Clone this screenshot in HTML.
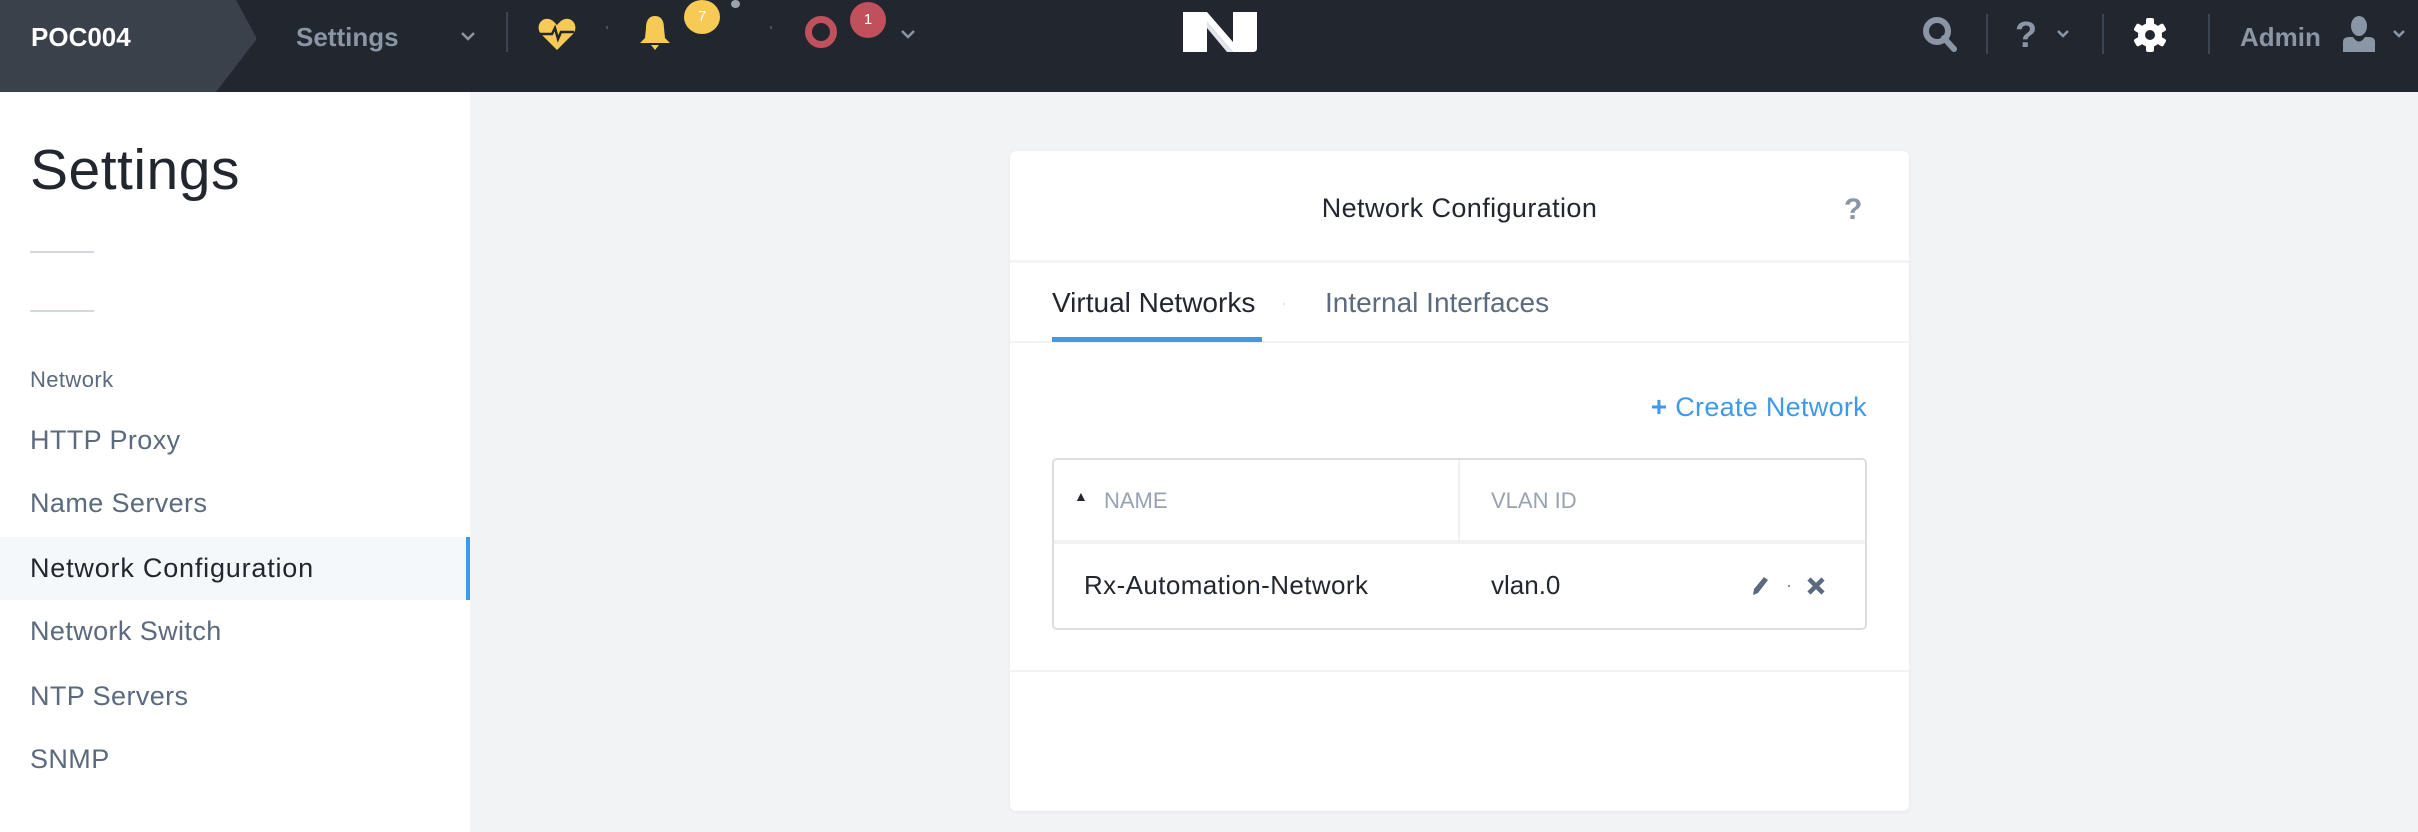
<!DOCTYPE html>
<html><head><meta charset="utf-8"><style>
*{margin:0;padding:0;box-sizing:border-box}
body{width:2418px;height:832px;overflow:hidden;background:#f2f3f5;font-family:"Liberation Sans",sans-serif;position:relative}
.top{position:absolute;left:0;top:0;width:2418px;height:92px;background:#22272f}
.abs{position:absolute}
.side{position:absolute;left:0;top:92px;width:470px;height:740px;background:#fff}
.nav{position:absolute;left:30px;font-size:27px;color:#5b6a7e;letter-spacing:0.4px}
.card{position:absolute;left:1010px;top:151px;width:899px;height:660px;background:#fff;border-radius:6px;box-shadow:0 1px 3px rgba(0,0,0,.06)}
</style></head><body>
<div class="top">
<svg class="abs" style="left:0;top:0" width="260" height="92"><polygon points="0,0 236,0 256,37 256,40 216,92 0,92" fill="#3a414b"/></svg>
<div class="abs" style="left:31px;top:22px;font-size:26px;font-weight:bold;color:#fff">POC004</div>
<div class="abs" style="left:296px;top:22px;font-size:26px;font-weight:bold;color:#8a95a5">Settings</div>
<svg class="abs" style="left:460px;top:30px" width="16" height="12"><path d="M2 3 L8 9 L14 3" stroke="#8a95a5" stroke-width="2.5" fill="none"/></svg>
<div class="abs" style="left:506px;top:12px;width:2px;height:40px;background:#3d4550"></div>
<svg class="abs" style="left:538px;top:17px" width="38" height="34" viewBox="0 0 38 34"><path d="M19 33 L3 17 C-3 10 3 0 11 2 C15 3 17 6 19 8 C21 6 23 3 27 2 C35 0 41 10 35 17 Z" fill="#f7c955"/><path d="M2 17 H14 L17 11 L20 22 L23 15 L36 15" stroke="#22272f" stroke-width="2.5" fill="none"/></svg>
<div class="abs" style="left:606px;top:26px;width:2px;height:3px;background:#4a525d"></div>
<svg class="abs" style="left:638px;top:14px" width="34" height="36" viewBox="0 0 34 36"><path d="M17 2 C24 2 26 8 26 14 L27 24 L32 29 L2 29 L7 24 L8 14 C8 8 10 2 17 2Z" fill="#f7c955"/><path d="M13 31 H21 L17 36Z" fill="#f7c955"/></svg>
<div class="abs" style="left:684px;top:0;width:36px;height:34px;border-radius:50%;background:#f7c955;color:#fff;font-size:15px;text-align:center;line-height:34px">7</div>
<div class="abs" style="left:731px;top:0;width:9px;height:8px;border-radius:50%;background:#9aa3ae"></div>
<div class="abs" style="left:770px;top:26px;width:2px;height:3px;background:#4a525d"></div>
<div class="abs" style="left:805px;top:16px;width:32px;height:32px;border-radius:50%;border:7px solid #c0505b"></div>
<div class="abs" style="left:850px;top:2px;width:36px;height:36px;border-radius:50%;background:#c0505b;color:#fff;font-size:15px;text-align:center;line-height:36px">1</div>
<svg class="abs" style="left:900px;top:28px" width="16" height="12"><path d="M2 3 L8 9 L14 3" stroke="#8a95a5" stroke-width="2.5" fill="none"/></svg>
<svg class="abs" style="left:1183px;top:12px" width="74" height="40" viewBox="0 0 74 40"><path d="M0 0 H24 L50 30 V0 H74 V36 Q74 40 70 40 H50 L24 10 V40 H0Z" fill="#fff"/><path d="M24 10 L50 40 H44 L24 16Z" fill="#e3e6ea"/></svg>
<svg class="abs" style="left:1922px;top:16px" width="36" height="36" viewBox="0 0 36 36"><circle cx="15" cy="15" r="11" stroke="#8a95a5" stroke-width="6" fill="none"/><path d="M22 22 L32 33" stroke="#8a95a5" stroke-width="6" stroke-linecap="round"/></svg>
<div class="abs" style="left:1986px;top:14px;width:2px;height:40px;background:#3d4550"></div>
<div class="abs" style="left:2015px;top:14px;font-size:36px;font-weight:bold;color:#8a95a5">?</div>
<svg class="abs" style="left:2056px;top:29px" width="14" height="10"><path d="M2 2 L7 7 L12 2" stroke="#8a95a5" stroke-width="2.5" fill="none"/></svg>
<div class="abs" style="left:2102px;top:14px;width:2px;height:40px;background:#3d4550"></div>
<svg class="abs" style="left:2132px;top:17px" width="36" height="36" viewBox="0 0 36 36"><g fill="#fff"><circle cx="18" cy="18" r="12"/><rect x="14" y="1" width="8" height="34" rx="2"/><rect x="14" y="1" width="8" height="34" rx="2" transform="rotate(60 18 18)"/><rect x="14" y="1" width="8" height="34" rx="2" transform="rotate(120 18 18)"/></g><circle cx="18" cy="18" r="5" fill="#22272f"/></svg>
<div class="abs" style="left:2208px;top:14px;width:2px;height:40px;background:#3d4550"></div>
<div class="abs" style="left:2240px;top:22px;font-size:26px;font-weight:bold;color:#8a95a5">Admin</div>
<svg class="abs" style="left:2342px;top:16px" width="34" height="36" viewBox="0 0 34 36"><ellipse cx="17" cy="10" rx="8" ry="10" fill="#8a95a5"/><path d="M1 36 V26 Q1 21 7 21 L11 21 Q17 30 23 21 L27 21 Q33 21 33 26 V36Z" fill="#8a95a5"/></svg>
<svg class="abs" style="left:2392px;top:29px" width="14" height="10"><path d="M2 2 L7 7 L12 2" stroke="#8a95a5" stroke-width="2.5" fill="none"/></svg>
</div>

<div class="side">
<div class="abs" style="left:30px;top:45px;font-size:57px;color:#22272f;letter-spacing:0.5px">Settings</div>
<div class="abs" style="left:30px;top:159px;width:64px;height:2px;background:#d4d8de"></div>
<div class="abs" style="left:30px;top:218px;width:64px;height:2px;background:#d4d8de"></div>
<div class="nav" style="top:275px;font-size:22px">Network</div>
<div class="nav" style="top:333px">HTTP Proxy</div>
<div class="nav" style="top:396px">Name Servers</div>
<div class="abs" style="left:0;top:445px;width:470px;height:63px;background:#f5f8fb;border-right:4px solid #3e9ae8"></div>
<div class="nav" style="top:461px;color:#22272f;letter-spacing:0.8px">Network Configuration</div>
<div class="nav" style="top:524px">Network Switch</div>
<div class="nav" style="top:589px">NTP Servers</div>
<div class="nav" style="top:652px">SNMP</div>
</div>

<div class="card">
<div class="abs" style="left:0;top:42px;width:899px;text-align:center;font-size:27px;color:#22272f;letter-spacing:0.4px">Network Configuration</div>
<div class="abs" style="left:834px;top:42px;font-size:30px;font-weight:bold;color:#8a95a5">?</div>
<div class="abs" style="left:0;top:109px;width:899px;height:3px;background:#f2f3f5"></div>
<div class="abs" style="left:42px;top:136px;font-size:28px;color:#22272f">Virtual Networks</div>
<div class="abs" style="left:273px;top:152px;width:2px;height:2px;background:#e5e7ea"></div>
<div class="abs" style="left:315px;top:136px;font-size:28px;color:#5b6a7e">Internal Interfaces</div>
<div class="abs" style="left:0;top:190px;width:899px;height:2px;background:#f2f3f5"></div>
<div class="abs" style="left:42px;top:186px;width:210px;height:5px;background:#3e9ae8"></div>
<div class="abs" style="right:42px;top:240px;font-size:27px;color:#3e9ae8;letter-spacing:0.3px"><b style="font-size:28px">+</b> Create Network</div>
<div class="abs" style="left:42px;top:307px;width:815px;height:172px;border:2px solid #dadde2;border-radius:5px;overflow:hidden">
<div class="abs" style="left:20px;top:28px;font-size:14px;color:#22272f">▲</div>
<div class="abs" style="left:50px;top:28px;font-size:22px;color:#98a2b0">NAME</div>
<div class="abs" style="left:404px;top:0;width:2px;height:82px;background:#eef0f2"></div>
<div class="abs" style="left:437px;top:28px;font-size:22px;color:#98a2b0">VLAN ID</div>
<div class="abs" style="left:0;top:80px;width:815px;height:4px;background:#f0f2f4"></div>
<div class="abs" style="left:30px;top:110px;font-size:26px;color:#22272f;letter-spacing:0.4px">Rx-Automation-Network</div>
<div class="abs" style="left:437px;top:110px;font-size:26px;color:#22272f">vlan.0</div>
<svg class="abs" style="left:696px;top:115px" width="20" height="22" viewBox="0 0 20 22"><path d="M3 20 L4 14 L14 2 L18 5 L8 18Z" fill="#5b6a7e"/></svg>
<div class="abs" style="left:734px;top:125px;width:2px;height:2px;background:#8a95a5"></div>
<svg class="abs" style="left:752px;top:116px" width="20" height="20" viewBox="0 0 20 20"><path d="M3 3 L17 17 M17 3 L3 17" stroke="#5b6a7e" stroke-width="4.5"/></svg>
</div>
<div class="abs" style="left:0;top:519px;width:899px;height:2px;background:#f0f2f4"></div>
</div>
</body></html>
